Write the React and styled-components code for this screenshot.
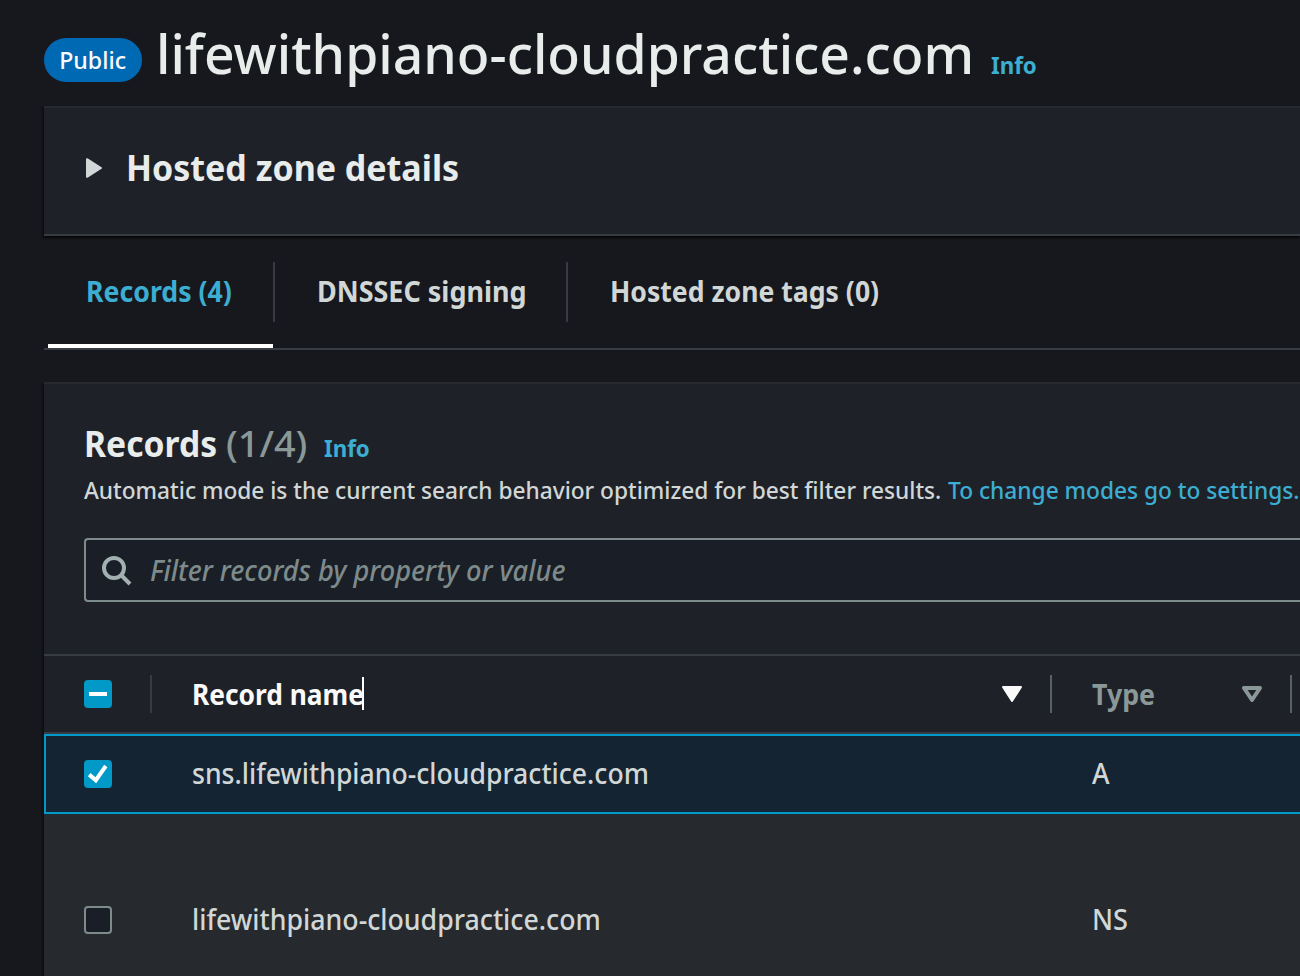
import React from 'react';
import styled, { createGlobalStyle } from 'styled-components';

const GlobalStyle = createGlobalStyle`
  *, *::before, *::after { box-sizing: border-box; }
  html, body { margin: 0; height: 100%; overflow: hidden; background: #17181d; }
  body {
    font-family: 'Noto Sans', 'Open Sans', sans-serif;
    font-weight: 500;
    color: #d1d7d6;
  }
  h1, h2, p { margin: 0; }
`;

const Page = styled.main`
  display: flex;
  flex-direction: column;
  width: 1300px;
  height: 976px;
  padding-left: 44px;
  overflow: hidden;
`;

/* Single-line text, slightly condensed. */
const Label = styled.span`
  display: block;
  flex: none;
  width: ${(p) => (p.$width ? `${p.$width}px` : 'max-content')};
  white-space: nowrap;
  transform: scaleX(${(p) => p.$condense || 0.955});
  transform-origin: ${(p) => p.$origin || 'left'} center;
`;

const TitleBar = styled.header`
  flex: none;
  display: flex;
  align-items: flex-start;
  height: 106px;
`;

const Badge = styled.span`
  display: flex;
  align-items: center;
  justify-content: center;
  width: 98px;
  height: 44px;
  margin-top: 38px;
  border-radius: 22px;
  background: #0069b4;
  color: #fafafa;
  font-size: 24px;
  line-height: 44px;
`;

const Title = styled.h1`
  width: 835px;
  margin-left: 14px;
  padding-top: 17px;
  color: #e8eceb;
  font-size: 55px;
  font-weight: 500;
  line-height: 72px;
`;

const InfoLink = styled.a`
  display: block;
  margin-top: ${(p) => p.$top}px;
  color: #3caed2;
  font-size: 24px;
  font-weight: 700;
  line-height: 32px;
`;

const Panel = styled.section`
  flex: none;
  display: flex;
  flex-direction: column;
  height: ${(p) => p.$height}px;
  background: #1f2129;
  border-top: 2px solid #26292d;
  border-bottom: 2px solid #373c44;
  box-shadow: 0 2px 2px rgba(0, 0, 0, 0.6), -2px 2px 2px rgba(0, 0, 0, 0.3);
`;

const Expander = styled.div`
  display: flex;
  align-items: center;
  height: 120px;
  padding-left: 42px;
`;

const SectionTitle = styled.h2`
  color: #e8eceb;
  font-size: 36px;
  font-weight: 700;
  line-height: 44px;
`;

const Tabs = styled.nav`
  flex: none;
  display: flex;
  height: 114px;
  margin-bottom: 32px;
  padding-left: 4px;
  border-bottom: 2px solid #373c44;
`;

const Tab = styled.div`
  flex: none;
  width: ${(p) => p.$width}px;
  border-bottom: 4px solid ${(p) => (p.$active ? '#ffffff' : 'transparent')};
  color: ${(p) => (p.$active ? '#3caed2' : '#d1d7d6')};
  font-size: 28px;
  font-weight: 700;
`;

const TabText = styled.div`
  height: 60px;
  margin-top: 26px;
  padding-left: ${(p) => p.$pad}px;
  line-height: 59px;
`;

const TabDivider = styled.span`
  width: 2px;
  height: 60px;
  margin-top: 26px;
  background: #373c44;
`;

const PanelHeading = styled.div`
  display: flex;
  height: 65px;
  margin-top: 18px;
  padding: 20px 0 0 40px;
`;

const Counter = styled.span`
  display: block;
  width: 98px;
  color: #8a9998;
  font-size: 36px;
  line-height: 44px;
`;

const Description = styled.p`
  display: flex;
  height: 32px;
  margin-top: 7px;
  padding-left: 40px;
  font-size: 24px;
  line-height: 32px;
`;

const DescriptionLink = styled.a`
  color: #3caed2;
`;

const SearchBox = styled.div`
  flex: none;
  display: flex;
  align-items: center;
  gap: 18px;
  height: 64px;
  margin: 32px 0 52px 40px;
  padding-left: 16px;
  border: 2px solid #7d8b8b;
  border-right: 0;
  border-radius: 4px 0 0 4px;
  background: #1a1e26;
  color: #7d8b8b;
  font-size: 28px;
  font-style: italic;
`;

const Row = styled.div`
  flex: none;
  display: grid;
  grid-template-columns: 108px 900px 240px;
  align-items: center;
  height: ${(p) => p.$height}px;
  font-size: 28px;
  line-height: 40px;
`;

const HeaderRow = styled(Row)`
  border-top: 2px solid #373c44;
  border-bottom: 2px solid #373c44;
  font-weight: 700;
`;

const SelectedRow = styled(Row)`
  grid-template-columns: 106px 900px 240px;
  border: 2px solid #0099c8;
  border-right: 0;
  background: #142433;
`;

const StripedRow = styled(Row)`
  background: #26292d;
`;

const CheckCell = styled.div`
  display: flex;
  align-items: center;
  justify-content: space-between;
  padding-left: ${(p) => p.$pad}px;
`;

const HeadCell = styled.div`
  display: flex;
  align-items: center;
  justify-content: space-between;
  padding-left: 40px;
  color: ${(p) => (p.$active ? '#fafafa' : '#8a9998')};
`;

const HeadTools = styled.div`
  display: flex;
  align-items: center;
  gap: 28px;
`;

const ColumnDivider = styled.span`
  width: 2px;
  height: 38px;
  background: ${(p) => (p.$strong ? '#596068' : '#373c44')};
`;

const HeadLabel = styled.div`
  display: flex;
  align-items: center;
  padding-bottom: 1px;
`;

const Caret = styled.i`
  flex: none;
  width: 2px;
  height: 33px;
  margin-left: -2px;
  background: #ffffff;
`;

const Cell = styled.div`
  padding: 0 0 2px 40px;
`;

const Box = styled.span`
  display: flex;
  width: 28px;
  height: 28px;
  border: 2px solid ${(p) => (p.$on ? '#0099c8' : '#7d8b8b')};
  border-radius: 4px;
  background: ${(p) => (p.$on ? '#0099c8' : '#1a1e26')};
`;

const SearchIcon = () => (
  <svg width="30" height="32" viewBox="0 0 30 32" fill="none" stroke="#a3b0b0" strokeWidth="4">
    <circle cx="12" cy="14" r="10" />
    <path d="M19 21L28 30" />
  </svg>
);

const ExpandIcon = () => (
  <svg width="40" height="20" viewBox="0 0 40 20">
    <path
      d="M1 1.2L15 10L1 18.8Z"
      fill="currentColor"
      stroke="currentColor"
      strokeWidth="2"
      strokeLinejoin="round"
    />
  </svg>
);

const Checkbox = ({ state }) => (
  <Box $on={state !== 'off'}>
    {state === 'mixed' && (
      <svg width="24" height="24" viewBox="0 0 24 24">
        <path d="M3 12H21" stroke="#fff" strokeWidth="4" />
      </svg>
    )}
    {state === 'on' && (
      <svg width="24" height="24" viewBox="0 0 24 24">
        <path d="M3.2 12.6L9.8 18.2L19.8 4" fill="none" stroke="#fff" strokeWidth="4" />
      </svg>
    )}
  </Box>
);

const SortIcon = ({ filled }) => (
  <svg width="20" height="16" viewBox="0 0 20 16">
    <path
      d={filled ? 'M1 1H19L10 15Z' : 'M2 2H18L10 14Z'}
      fill={filled ? 'currentColor' : 'none'}
      stroke="currentColor"
      strokeWidth={filled ? 2 : 4}
      strokeLinejoin="round"
    />
  </svg>
);

export default function App() {
  return (
    <Page>
      <GlobalStyle />
      <TitleBar>
        <Badge><Label $condense={0.965} $origin="center">Public</Label></Badge>
        <Title><Label $condense={0.972}>lifewithpiano-cloudpractice.com</Label></Title>
        <InfoLink $top={49}><Label $condense={0.93}>Info</Label></InfoLink>
      </TitleBar>

      <Panel $height={130}>
        <Expander>
          <ExpandIcon />
          <SectionTitle>
            <Label $condense={0.944}>Hosted zone details</Label>
          </SectionTitle>
        </Expander>
      </Panel>

      <Tabs>
        <Tab $active $width={225}>
          <TabText $pad={38}><Label $condense={0.953}>Records (4)</Label></TabText>
        </Tab>
        <TabDivider />
        <Tab $width={291}>
          <TabText $pad={42}><Label $condense={0.963}>DNSSEC signing</Label></TabText>
        </Tab>
        <TabDivider />
        <Tab $width={360}>
          <TabText $pad={42}><Label $condense={0.95}>Hosted zone tags (0)</Label></TabText>
        </Tab>
      </Tabs>

      <Panel $height={700}>
        <PanelHeading>
          <SectionTitle><Label $width={142} $condense={0.935}>Records</Label></SectionTitle>
          <Counter><Label $condense={1.05}>(1/4)</Label></Counter>
          <InfoLink $top={10}><Label $condense={0.93}>Info</Label></InfoLink>
        </PanelHeading>
        <Description>
          <Label $width={864} $condense={0.945}>
            Automatic mode is the current search behavior optimized for best filter results.
          </Label>
          <DescriptionLink>
            <Label $width={352} $condense={0.946}>To change modes go to settings.</Label>
          </DescriptionLink>
        </Description>
        <SearchBox>
          <SearchIcon />
          <Label $condense={0.971}>Filter records by property or value</Label>
        </SearchBox>
        <HeaderRow $height={80}>
          <CheckCell $pad={40}>
            <Checkbox state="mixed" />
            <ColumnDivider />
          </CheckCell>
          <HeadCell $active>
            <HeadLabel>
              <Label $width={172} $condense={0.94}>Record name</Label>
              <Caret />
            </HeadLabel>
            <HeadTools><SortIcon filled /><ColumnDivider $strong /></HeadTools>
          </HeadCell>
          <HeadCell>
            <HeadLabel><Label $condense={0.955}>Type</Label></HeadLabel>
            <HeadTools><SortIcon /><ColumnDivider $strong /></HeadTools>
          </HeadCell>
        </HeaderRow>
        <SelectedRow $height={80}>
          <CheckCell $pad={38}><Checkbox state="on" /></CheckCell>
          <Cell><Label $condense={0.95}>sns.lifewithpiano-cloudpractice.com</Label></Cell>
          <Cell><Label>A</Label></Cell>
        </SelectedRow>
        <StripedRow $height={212}>
          <CheckCell $pad={40}><Checkbox state="off" /></CheckCell>
          <Cell><Label $condense={0.954}>lifewithpiano-cloudpractice.com</Label></Cell>
          <Cell><Label $condense={0.97}>NS</Label></Cell>
        </StripedRow>
      </Panel>
    </Page>
  );
}
